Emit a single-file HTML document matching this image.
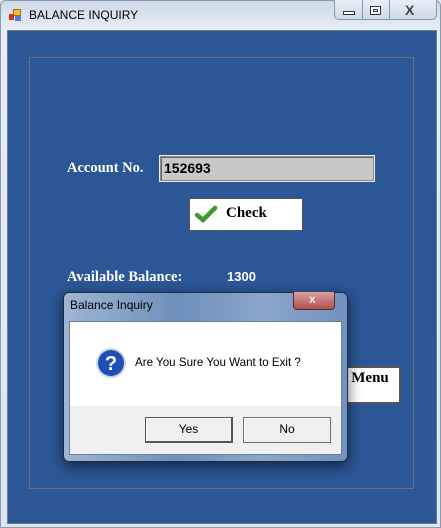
<!DOCTYPE html>
<html><head><style>
*{margin:0;padding:0;box-sizing:border-box}
body{width:441px;height:528px;background:#dfe7f1;position:relative;overflow:hidden;font-family:"Liberation Sans",sans-serif}
.abs{position:absolute}
.frame{left:0;top:0;width:441px;height:528px;background:linear-gradient(180deg,#cfdbe9 0,#e6edf5 30px,#dde6f0 100%);border:1px solid #8a9bb0;border-radius:6px 6px 0 0}
.client{left:7px;top:30px;width:430px;height:494px;background:#2b5796;border:1px solid #6c7d92}
.panel{left:29px;top:57px;width:385px;height:432px;border:1px solid #6f6f70}
.lbl{color:#fff;font-family:"Liberation Serif",serif;font-weight:bold;font-size:14.5px}
.dlg{left:63px;top:292px;width:285px;height:170px;border-radius:6px;background:linear-gradient(90deg,#9fb6d3,#6e8fbc 40%,#8aa6cb 70%,#7191bf);border:1px solid #1b2c45;box-shadow:0 4px 14px rgba(0,0,0,.6)}
.btn{background:#efefef;border:1px solid #707070;box-shadow:inset 1px 1px 0 #fff;font-size:12px;text-align:center;line-height:23px;color:#000}
</style></head><body>
<div class="abs frame"></div>
<div class="abs" style="left:9px;top:9px;width:12px;height:12px">
<div class="abs" style="left:4px;top:0;width:8px;height:7px;background:#f0c030;border:1px solid #a07010"></div>
<div class="abs" style="left:0;top:5px;width:5px;height:6px;background:#d03020"></div>
<div class="abs" style="left:6px;top:7px;width:6px;height:5px;background:#5080d0"></div>
</div>
<div class="abs" style="left:29px;top:8px;font-size:12px;color:#000">BALANCE INQUIRY</div>
<div class="abs" style="left:334px;top:0;width:103px;height:20px;border:1px solid #8897aa;border-top:none;border-radius:0 0 5px 5px;background:linear-gradient(#e8eef6,#cdd9e8)"></div>
<div class="abs" style="left:362px;top:0;width:1px;height:20px;background:#8897aa"></div>
<div class="abs" style="left:389px;top:0;width:1px;height:20px;background:#8897aa"></div>
<div class="abs" style="left:343px;top:11px;width:12px;height:4px;border:1px solid #333;background:#fff"></div>
<div class="abs" style="left:370px;top:6px;width:11px;height:9px;border:1px solid #333;background:#fff"><div style="margin:2px;height:3px;border:1px solid #333"></div></div>
<div class="abs" style="left:405px;top:2px;font-size:14px;font-weight:bold;color:#444">X</div>
<div class="abs client"></div>
<div class="abs panel"></div>
<div class="abs lbl" style="left:67px;top:160px">Account No.</div>
<div class="abs" style="left:160px;top:156px;width:214px;height:25px;background:#c8c8c8;border:1px solid #888;box-shadow:inset 1px 1px 0 #666,0 0 0 1px #eee"></div>
<div class="abs" style="left:164px;top:160px;font-family:'Liberation Sans',sans-serif;font-weight:bold;font-size:14px;color:#000">152693</div>
<div class="abs" style="left:189px;top:198px;width:114px;height:33px;background:#fff;border:1px solid #555"></div>
<svg class="abs" style="left:195px;top:205px" width="22" height="18"><path d="M2 10 L8 15 L20 3" stroke="#3a9a2a" stroke-width="4.5" fill="none" stroke-linecap="round"/></svg>
<div class="abs" style="left:226px;top:205px;font-family:'Liberation Serif',serif;font-weight:bold;font-size:15px;color:#000">Check</div>
<div class="abs lbl" style="left:67px;top:269px">Available Balance:</div>
<div class="abs lbl" style="left:227px;top:269px;font-family:'Liberation Sans',sans-serif;font-size:13px">1300</div>
<div class="abs" style="left:336px;top:366px;width:65px;height:38px;background:#fff;border:2px solid #555"></div>
<div class="abs" style="left:340px;top:370px;font-family:'Liberation Serif',serif;font-weight:bold;font-size:15px;color:#000">o Menu</div>
<div class="abs dlg"></div>
<div class="abs" style="left:70px;top:298px;font-size:12px;color:#000">Balance Inquiry</div>
<div class="abs" style="left:293px;top:292px;width:42px;height:18px;border:1px solid #5a2a2a;border-top:none;border-radius:0 0 4px 4px;background:linear-gradient(#d9a0a0,#b05050)"></div>
<div class="abs" style="left:309px;top:292px;font-size:12px;font-weight:bold;color:#f4e4e4">x</div>
<div class="abs" style="left:69px;top:321px;width:273px;height:134px;background:#f0f0f0;border:1px solid #6e7f99"></div>
<div class="abs" style="left:70px;top:322px;width:271px;height:84px;background:#fff"></div>
<svg class="abs" style="left:95px;top:347px" width="32" height="32"><circle cx="16" cy="16" r="15" fill="#d0d6e0"/><circle cx="16" cy="16" r="13" fill="#1f4fb4"/><text x="16" y="23" text-anchor="middle" font-family="Liberation Sans" font-weight="bold" font-size="20" fill="#fff">?</text></svg>
<div class="abs" style="left:135px;top:356px;font-size:11.6px;color:#000">Are You Sure You Want to Exit ?</div>
<div class="abs btn" style="left:145px;top:417px;width:88px;height:26px;border-color:#555;border-width:1px 2px 2px 1px">Yes</div>
<div class="abs btn" style="left:243px;top:417px;width:88px;height:26px">No</div>
</body></html>
